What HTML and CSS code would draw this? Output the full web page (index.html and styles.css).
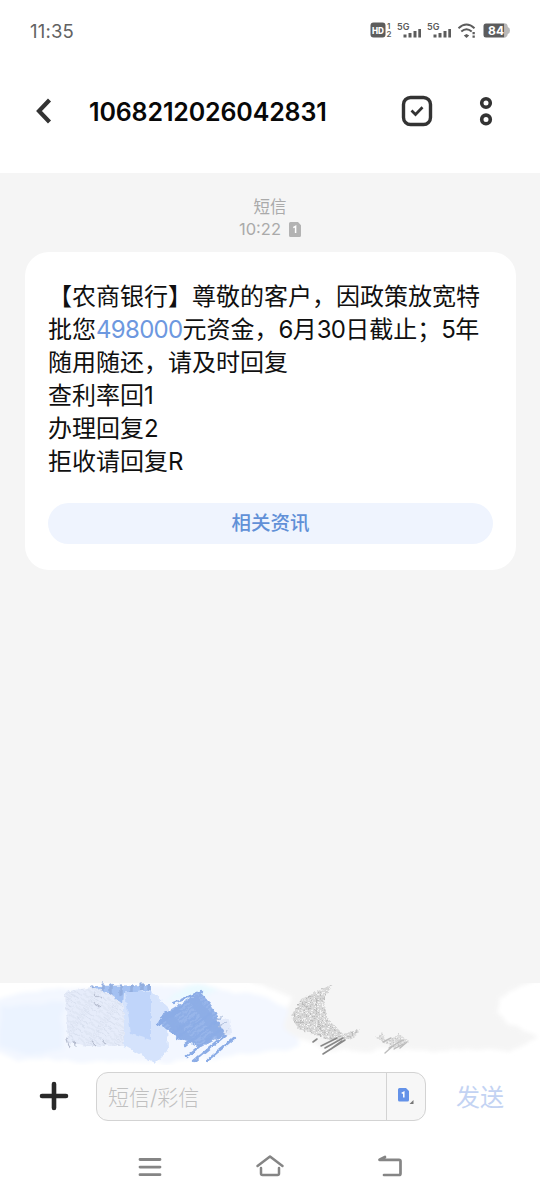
FILE: index.html
```html
<!DOCTYPE html>
<html lang="zh-CN">
<head>
<meta charset="utf-8">
<title>短信</title>
<link rel="stylesheet" href="styles.css">
</head>
<body>
<div class="screen">
  <div class="status">
    <span class="clock">11:35</span>
    <svg class="status-icons" viewBox="366 16 146 28" width="146" height="28">
      <g fill="#5c5c5c">
        <rect x="370.500" y="22.500" width="15" height="15" rx="3"/>
        <g class="tiny">
          <text x="372" y="33.500" font-size="8.500" fill="#fff" font-weight="800" textLength="12" lengthAdjust="spacingAndGlyphs">HD</text>
          <text x="387" y="29" font-size="8" font-weight="600">1</text>
          <text x="386.500" y="37.300" font-size="8" font-weight="600">2</text>
          <text x="397" y="30" font-size="9" font-weight="600" textLength="12.500">5G</text>
          <text x="427" y="30" font-size="9" font-weight="600" textLength="12.500">5G</text>
        </g>
        <path d="M403.500 34.500h3v3h-3zM408.500 33h3v4.500h-3zM413.500 31h3v6.500h-3zM418.300 29h2.700v8.500h-2.700zM433.500 34.500h3v3h-3zM438.500 33h3v4.500h-3zM443.500 31h3v6.500h-3zM448.300 29h2.700v8.500h-2.700z"/>
        <path d="M466.500 34l2.700 1.600-2.700 2.400-2.700-2.400zM472.500 32h2.300v2.200h-2.300zM472.500 35.500h2.300v2.200h-2.300z"/>
        <path d="M486 23.500h18.500v14H486a2.500 2.500 0 0 1-2.500-2.500v-9a2.500 2.500 0 0 1 2.500-2.500z"/>
      </g>
      <path d="M458.500 28.200q8-7.400 16 0M461.300 31.600q5.200-4.600 10.400 0" fill="none" stroke="#5c5c5c" stroke-width="2"/>
      <path d="M504.500 23.500h1q2 .3 2.300 3.500 2.200.8 2.200 3.500t-2.200 3.500q-.3 3.200-2.300 3.500h-1z" fill="#b9b9b9"/>
      <text class="tiny" x="488" y="34.900" font-size="12" font-weight="700" fill="#fff" textLength="16">84</text>
    </svg>
  </div>

  <header class="header">
    <svg class="back" viewBox="0 0 18 28" width="18" height="28"><path d="M14.500 3L4 14l10.500 11" fill="none" stroke="#333" stroke-width="4.200"/></svg>
    <h1 class="title">1068212026042831</h1>
    <svg class="select" viewBox="0 0 32 32" width="32" height="32"><rect x="2.500" y="2.500" width="27" height="27" rx="7" fill="none" stroke="#333" stroke-width="3.400"/><path d="M10.500 15.500l4 4 7-7.300" fill="none" stroke="#333" stroke-width="2.700"/></svg>
    <svg class="more" viewBox="0 0 14 30" width="14" height="30"><g fill="none" stroke="#333" stroke-width="3.600"><circle cx="7" cy="7" r="4.300"/><circle cx="7" cy="23.400" r="4.300"/></g></svg>
  </header>

  <main class="thread">
    <div class="meta">
      <div>短信</div>
      <div class="meta-time"><span>10:22</span>
        <svg viewBox="0 0 12 15" width="12" height="15"><path d="M1.500 0H9l3 3.200V13.500a1.500 1.500 0 0 1-1.500 1.500h-9A1.500 1.500 0 0 1 0 13.500v-12A1.500 1.500 0 0 1 1.500 0z" fill="#b3b3b3"/><path d="M4.300 5.600L6.600 4.300V11" fill="none" stroke="#fff" stroke-width="1.500"/></svg>
      </div>
    </div>
    <article class="bubble">
      <p class="message">【农商银行】尊敬的客户，因政策放宽特<br>批您<span class="num amount">498000</span>元资金，<span class="num">6</span>月<span class="num">30</span>日截止；<span class="num">5</span>年<br>随用随还，请及时回复<br>查利率回<span class="num">1</span><br>办理回复<span class="num">2</span><br>拒收请回复R</p>
      <div class="action">相关资讯</div>
    </article>
  </main>

  <svg class="scribbles" viewBox="0 975 540 90" width="540" height="90">
    <defs>
      <filter id="rough" x="-15%" y="-15%" width="130%" height="130%"><feTurbulence type="fractalNoise" baseFrequency=".18" numOctaves="2" seed="4"/><feDisplacementMap in="SourceGraphic" scale="5" xChannelSelector="R" yChannelSelector="G"/></filter>
      <filter id="soft" x="-10%" y="-20%" width="120%" height="140%"><feTurbulence type="fractalNoise" baseFrequency=".04" numOctaves="2" seed="8" result="n"/><feDisplacementMap in="SourceGraphic" in2="n" scale="10" xChannelSelector="R" yChannelSelector="G"/><feGaussianBlur stdDeviation="2"/></filter>
      <filter id="grain" x="-5%" y="-5%" width="110%" height="110%"><feTurbulence type="fractalNoise" baseFrequency=".5" numOctaves="2" seed="3" result="n"/><feColorMatrix in="n" values="0 0 0 0 0  0 0 0 0 0  0 0 0 0 0  4 0 0 0 -1.500" result="m"/><feComposite in="SourceGraphic" in2="m" operator="in" result="g"/><feDisplacementMap in="g" in2="n" scale="4" xChannelSelector="R" yChannelSelector="G"/></filter>
      <pattern id="hatch" width="30" height="4" patternUnits="userSpaceOnUse" patternTransform="rotate(-38)"><path d="M0 1h22M12 3h18" stroke="#7da2e0" stroke-width=".8"/></pattern>
      <pattern id="pale-hatch" width="22" height="5" patternUnits="userSpaceOnUse" patternTransform="rotate(35)"><path d="M0 1h15M8 3.500h14" stroke="#cfd7e8" stroke-width=".6"/></pattern>
    </defs>
    <rect x="0" y="975" width="540" height="90" fill="#fff"/>
    <rect x="0" y="975" width="540" height="8" fill="#f5f5f5"/>
    <g filter="url(#soft)">
      <path d="M4 997L30 990 170 986 205 984 245 993 275 1002 300 1012V1046L250 1054 170 1062 20 1060-8 1050V1002z" fill="#f3f7ff"/>
      <path d="M0 1008L64 1001V1050L30 1055 0 1046z" fill="#ebf3ff"/>
      <path d="M165 999L196 983 220 989 200 1000z" fill="#eafaff"/>
      <path d="M250 965H560V976L520 984 500 998 495 1012 510 1026 540 1036 525 1045 508 1050H325L284 1030 290 996 250 984z" fill="#f5f5f5"/>
    </g>
    <g filter="url(#rough)">
      <path d="M92 986L151 985V1010H116z" fill="#a3c0f1"/>
      <path d="M93 986v5m10-6v7m8-7v9m10-8v9m10-9v8m11-9v8m7-7v8" stroke="#93aedf" stroke-width="3.500" stroke-linecap="round"/>
      <path d="M124 994L150 990 169 1008 167 1026 168 1050 155 1063 119 1043z" fill="#d5e3fc"/>
      <path d="M125 992H151V1040L131 1034z" fill="#c0d5fa"/>
      <path d="M65 992L92 987 107 992 124 1005V1046L88 1046 68 1042z" fill="#e6ecfa"/>
      <path d="M65 992L92 987 107 992 124 1005V1046L88 1046 68 1042z" fill="url(#pale-hatch)"/>
      <path d="M94 994l8 4m-9 4l8 5m-35 29l4 12m5-8l1 7m15-6l5 5m6-7l4 5" stroke="#b5bccf" stroke-width="1.100" fill="none"/>
      <path d="M163 1014L200 992 210 1003 219 1018 226 1034 201 1047 178 1038 162 1026z" fill="#97b5ea"/>
      <path d="M163 1014L200 992 210 1003 219 1018 226 1034 201 1047 178 1038 162 1026z" fill="url(#hatch)"/>
      <path d="M157 1024l21-14m-16 8l26-16m-14 1l28-12m-42 32l20-12m-8 22l24-16m-20 22l33-24m-24 30l34-26m-33 38l40-32m-32 36l34-28m-20 27l26-22" stroke="#8bace6" stroke-width="2.300" stroke-linecap="round" fill="none"/>
      <path d="M217 1020L230 1018 232 1034 226 1036z" fill="#e3eafa"/>
      <path d="M216 1020l7-4m-5 11l9-5m-3 11l6-5" stroke="#b3c2de" fill="none"/>
    </g>
    <g filter="url(#grain)">
      <path d="M291 1016L301 999 333 984 324 999 327 1018 343 1034 360 1029 354 1038 332 1041 313 1034 298 1029z" fill="#bababa"/>
      <path d="M376 1038l6-6 4 10 13-8 10 7-13 8z" fill="#c4c4c4"/>
    </g>
    <g fill="none" stroke="#888" stroke-width="1.600" stroke-linecap="round">
      <path d="M313 1042l4-3m4 7l16-8m-12 10l18-10m-20 16l22-14m-14 9l11-8"/>
      <path d="M385 1053l9-8m-5 3l14-8m-9 9l9-5m-20-2l8-4m9 10l7-6" stroke="#bcbcbc" stroke-width="1.400"/>
    </g>
  </svg>

  <footer class="composer">
    <svg class="plus" viewBox="0 0 30 30" width="30" height="30"><path d="M15 3v24M3 15h24" stroke="#292929" stroke-width="4.600" stroke-linecap="round"/></svg>
    <div class="field">
      <span class="placeholder">短信/彩信</span>
      <span class="sim"><svg viewBox="0 0 18 18" width="18" height="18"><path d="M2.500 1H9l3 3v9a1.500 1.500 0 0 1-1.500 1.500h-8A1.500 1.500 0 0 1 1 13V2.500A1.500 1.500 0 0 1 2.500 1z" fill="#6492e8"/><path d="M4.700 6.300L6.800 5.200V10.500" fill="none" stroke="#fff" stroke-width="1.500"/><path d="M16.500 13v4h-4z" fill="#777"/></svg></span>
    </div>
    <span class="send">发送</span>
  </footer>

  <nav class="nav">
    <svg viewBox="136 1152 28 30" width="28" height="30"><path d="M140 1159.500h20m-20 7.600h20m-20 7.600h20" stroke="#858585" stroke-width="2.800" stroke-linecap="round"/></svg>
    <svg viewBox="254 1152 32 30" width="32" height="30"><path d="M257.500 1166L270 1156.500l12.500 9.500M261 1168v5.500q0 1.500 1.500 1.500h15q1.500 0 1.500-1.500V1168" fill="none" stroke="#858585" stroke-width="2.500" stroke-linecap="round" stroke-linejoin="round"/></svg>
    <svg viewBox="376 1152 28 30" width="28" height="30"><path d="M385 1157l-5.500 2.800H399q1.500 0 1.500 1.500V1173.500q0 1.500-1.500 1.500H384" fill="none" stroke="#858585" stroke-width="2.700" stroke-linecap="round" stroke-linejoin="round"/></svg>
  </nav>
</div>
</body>
</html>
```

FILE: styles.css
```css
* { box-sizing: border-box; }
body { margin: 0; background: #fff; font-family: Inter, "Noto Sans CJK SC", sans-serif; }
svg { display: block; flex: none; }
.screen { width: 540px; height: 1199px; display: flex; flex-direction: column; overflow: hidden; }
.status { height: 62px; display: flex; justify-content: space-between; align-items: center; padding: 0 28px 2px 30px; }
.clock { font-size: 18.500px; color: #626262; letter-spacing: .2px; padding-top: 2px; }
.tiny { font-family: Inter, sans-serif; }
.header { height: 111px; display: flex; align-items: center; padding: 0 47px 14px 35px; }
.title { margin: 2px 0 0 36px; width: 312px; font-size: 25px; line-height: 30px; font-weight: 600; letter-spacing: -.15px; color: #080808; white-space: nowrap; }
.more { margin-left: 46px; }
.thread { height: 802px; flex: none; background: #f5f5f5; padding: 24px 25px 0; }
.meta { height: 55px; text-align: center; color: #aaa; font-size: 16.500px; line-height: 21.500px; }
.meta-time { display: flex; justify-content: center; align-items: center; gap: 8px; }
.bubble { width: 491px; height: 318px; background: #fff; border-radius: 24px; padding: 28px 23px 0; }
.message { margin: 0; font-size: 24px; line-height: 33px; color: #101010; white-space: nowrap; }
.num { letter-spacing: -.7px; }
.amount { color: #6d98df; }
.action { height: 41px; margin-top: 25px; border-radius: 21px; background: #eff4fe; color: #6190d7; font-size: 19.500px; font-weight: 500; line-height: 41px; text-align: center; }
.composer { height: 64px; display: flex; align-items: center; padding: 0 36px 2px 39px; }
.field { width: 330px; height: 49px; margin-left: 27px; border: 1px solid #d3d3d3; border-radius: 12px; background: #f7f7f7; display: flex; overflow: hidden; }
.placeholder { flex: 1; padding-left: 11px; font-size: 21px; line-height: 49px; color: #c0c0c0; font-weight: 300; }
.sim { width: 39px; border-left: 1px solid #d3d3d3; display: flex; align-items: center; justify-content: center; }
.send { margin-left: 30px; padding-top: 3px; font-size: 24px; line-height: 36px; color: #c3d3f3; }
.nav { flex: 1; display: flex; padding: 23px 136px 0; justify-content: space-between; }
```
